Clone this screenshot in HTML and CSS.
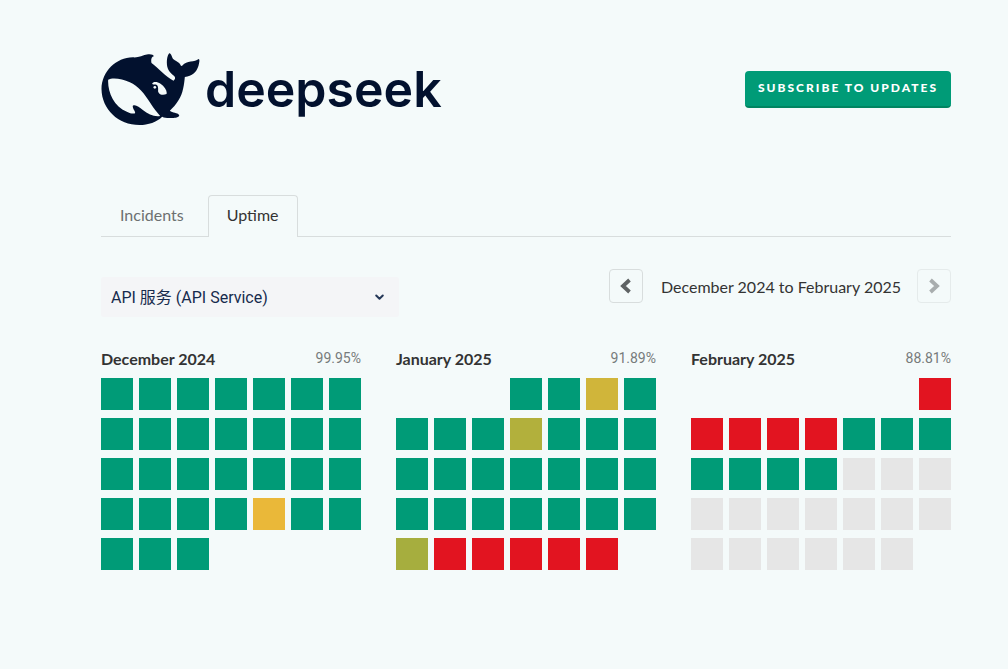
FILE: index.html
```html
<!DOCTYPE html>
<html lang="en">
<head>
<meta charset="utf-8">
<meta name="viewport" content="width=device-width, initial-scale=1">
<title>DeepSeek Service Status - Uptime</title>
<link rel="stylesheet" href="styles.css">
</head>
<body>
<div class="page">
  <header class="header">
    <a class="brand" href="#">
      <svg class="brand-mark" viewBox="18 24 294 216" aria-hidden="true">
        <path fill="#02112e" fill-rule="evenodd" d="M18 132C19 79 62 38 112 37C128 39 140 31 158 28C166 27 175 29 175 34C167 36 166 46 168 54C188 68 211 96 234 107C240 103 240 97 236 93C220 82 214 70 214 52C214 42 216 30 221 25C226 24 228 32 231 39C235 47 246 47 254 58C256 64 259 64 262 60C272 47 299 52 309 42C314 43 311 53 309 62C303 82 290 93 268 96C266 116 263 145 249 166C241 179 233 188 223 197C231 204 246 202 251 210C252 217 242 219 230 219C217 220 208 219 200 215C184 231 158 240 132 240C68 240 19 193 18 132ZM38 104C36 139 54 184 94 200C106 207 118 207 119 203C118 196 110 190 112 182C119 177 131 185 142 195C158 208 176 216 194 213C184 201 174 190 165 175C147 146 128 123 103 112C81 101 51 97 38 104ZM170 117C172 108 186 110 195 116C208 125 216 138 213 147C205 151 192 151 188 140C187 134 190 126 184 120C180 117 175 120 170 117Z"/>
        <circle cx="178" cy="127" r="4" fill="#f4fafa"/>
      </svg>
      <span class="brand-name">deepseek</span>
    </a>
    <button class="subscribe" type="button">Subscribe to updates</button>
  </header>

  <nav class="tabs">
    <a class="tab" href="#incidents">Incidents</a>
    <a class="tab tab-active" href="#uptime" aria-current="page">Uptime</a>
  </nav>

  <main>
    <div class="controls">
      <div class="picker">
        <select class="picker-select" aria-label="Component">
          <option>API 服务 (API Service)</option>
        </select>
        <svg class="picker-arrow" viewBox="0 0 10 8" aria-hidden="true"><path d="M2 2.2L5 5.2L8 2.2" fill="none" stroke="#253858" stroke-width="1.8" stroke-linecap="round" stroke-linejoin="round"/></svg>
      </div>
      <div class="range">
        <button class="step" type="button" aria-label="Previous months"><svg class="step-icon" viewBox="0 0 12 16" aria-hidden="true"><path d="M9.500 2L3 8L9.500 14" fill="none" stroke="#5f6364" stroke-width="3.8"/></svg></button>
        <span class="range-text">December 2024 to February 2025</span>
        <button class="step" type="button" aria-label="Next months" disabled><svg class="step-icon" viewBox="0 0 12 16" aria-hidden="true"><path d="M2.500 2L9 8L2.500 14" fill="none" stroke="#5f6364" stroke-width="3.8"/></svg></button>
      </div>
    </div>

    <div class="months">
      <section class="month">
        <div class="month-head"><h2 class="month-name">December 2024</h2><span class="month-rate">99.95%</span></div>
        <div class="days">
          <i class="day"></i><i class="day"></i><i class="day"></i><i class="day"></i><i class="day"></i><i class="day"></i><i class="day"></i>
          <i class="day"></i><i class="day"></i><i class="day"></i><i class="day"></i><i class="day"></i><i class="day"></i><i class="day"></i>
          <i class="day"></i><i class="day"></i><i class="day"></i><i class="day"></i><i class="day"></i><i class="day"></i><i class="day"></i>
          <i class="day"></i><i class="day"></i><i class="day"></i><i class="day"></i><i class="day partial-high"></i><i class="day"></i><i class="day"></i>
          <i class="day"></i><i class="day"></i><i class="day"></i>
        </div>
      </section>
      <section class="month">
        <div class="month-head"><h2 class="month-name">January 2025</h2><span class="month-rate">91.89%</span></div>
        <div class="days">
          <i class="day start-wed"></i><i class="day"></i><i class="day partial-mid"></i><i class="day"></i>
          <i class="day"></i><i class="day"></i><i class="day"></i><i class="day partial-low"></i><i class="day"></i><i class="day"></i><i class="day"></i>
          <i class="day"></i><i class="day"></i><i class="day"></i><i class="day"></i><i class="day"></i><i class="day"></i><i class="day"></i>
          <i class="day"></i><i class="day"></i><i class="day"></i><i class="day"></i><i class="day"></i><i class="day"></i><i class="day"></i>
          <i class="day partial-min"></i><i class="day major"></i><i class="day major"></i><i class="day major"></i><i class="day major"></i><i class="day major"></i>
        </div>
      </section>
      <section class="month">
        <div class="month-head"><h2 class="month-name">February 2025</h2><span class="month-rate">88.81%</span></div>
        <div class="days">
          <i class="day start-sat major"></i>
          <i class="day major"></i><i class="day major"></i><i class="day major"></i><i class="day major"></i><i class="day"></i><i class="day"></i><i class="day"></i>
          <i class="day"></i><i class="day"></i><i class="day"></i><i class="day"></i><i class="day future"></i><i class="day future"></i><i class="day future"></i>
          <i class="day future"></i><i class="day future"></i><i class="day future"></i><i class="day future"></i><i class="day future"></i><i class="day future"></i><i class="day future"></i>
          <i class="day future"></i><i class="day future"></i><i class="day future"></i><i class="day future"></i><i class="day future"></i><i class="day future"></i>
        </div>
      </section>
    </div>
  </main>
</div>
</body>
</html>
```
FILE: styles.css
```css
* { box-sizing: border-box; }

body {
  margin: 0;
  background: #f4fafa;
  color: #333;
  font: 16px/24px Lato, "Noto Sans CJK SC", sans-serif;
}

.page { padding: 53px 57px 56px 101px; }

.header {
  display: flex;
  align-items: center;
  justify-content: space-between;
}

.brand {
  display: flex;
  align-items: center;
  gap: 5px;
  color: #02112e;
  text-decoration: none;
}

.brand-mark { width: 99px; height: 72px; }

.brand-name {
  font: 600 50px/72px Inter, sans-serif;
}

.subscribe {
  height: 37px;
  padding: 0 13px;
  border: 0;
  border-bottom: 2px solid #008561;
  border-radius: 4px;
  background: #009b77;
  color: #fff;
  font: 900 12px/16px Lato, sans-serif;
  letter-spacing: 2px;
  text-transform: uppercase;
}

.tabs {
  display: flex;
  gap: 5px;
  margin-top: 70px;
  border-bottom: 1px solid #d8dddd;
}

.tab {
  padding: 7px 18px 10px;
  margin-bottom: -1px;
  border: 1px solid transparent;
  border-bottom: 0;
  border-radius: 4px 4px 0 0;
  color: #6c7070;
  text-decoration: none;
}

.tab-active {
  border-color: #d8dddd;
  background: #f4fafa;
  color: #333;
}

.controls {
  display: flex;
  align-items: flex-start;
  justify-content: space-between;
  margin-top: 32px;
}

.picker {
  position: relative;
  width: 298px;
  margin-top: 8px;
}

.picker-select {
  appearance: none;
  width: 100%;
  height: 40px;
  padding: 1px 10px 0;
  border: 0;
  border-radius: 3px;
  background: #f4f5f7;
  color: #172b4d;
  font: 16px/24px Roboto, "Noto Sans CJK SC", sans-serif;
}

.picker-arrow {
  position: absolute;
  top: 16px;
  right: 14px;
  width: 11px;
  height: 9px;
  pointer-events: none;
}

.range {
  display: flex;
  align-items: center;
  gap: 16px;
}

.range-text { padding: 2px 0 0 2px; }

.step {
  display: flex;
  align-items: center;
  justify-content: center;
  width: 34px;
  height: 34px;
  padding: 0;
  border: 1px solid #d8dddd;
  border-radius: 4px;
  background: transparent;
}

.step:disabled { opacity: 0.5; }

.step-icon { width: 12px; height: 16px; }

.months {
  display: grid;
  grid-template-columns: repeat(3, 1fr);
  gap: 35px;
  margin-top: 30px;
}

.month-head {
  display: flex;
  align-items: flex-start;
  justify-content: space-between;
  margin-bottom: 7px;
}

.month-name {
  margin: 0;
  font-size: 16px;
  font-weight: 700;
  line-height: 24px;
}

.month-rate {
  color: #777b7b;
  font: 14px/22px Roboto, sans-serif;
}

.days {
  display: grid;
  grid-template-columns: repeat(7, 1fr);
  gap: 8px 6px;
}

.day {
  aspect-ratio: 1;
  background: #009b77;
}

.start-wed { grid-column-start: 4; }
.start-sat { grid-column-start: 7; }
.partial-high { background: #eab839; }
.partial-mid { background: #d0b53a; }
.partial-low { background: #b2b03c; }
.partial-min { background: #a6ae3e; }
.major { background: #e21420; }
.future { background: #e6e6e6; }
```
